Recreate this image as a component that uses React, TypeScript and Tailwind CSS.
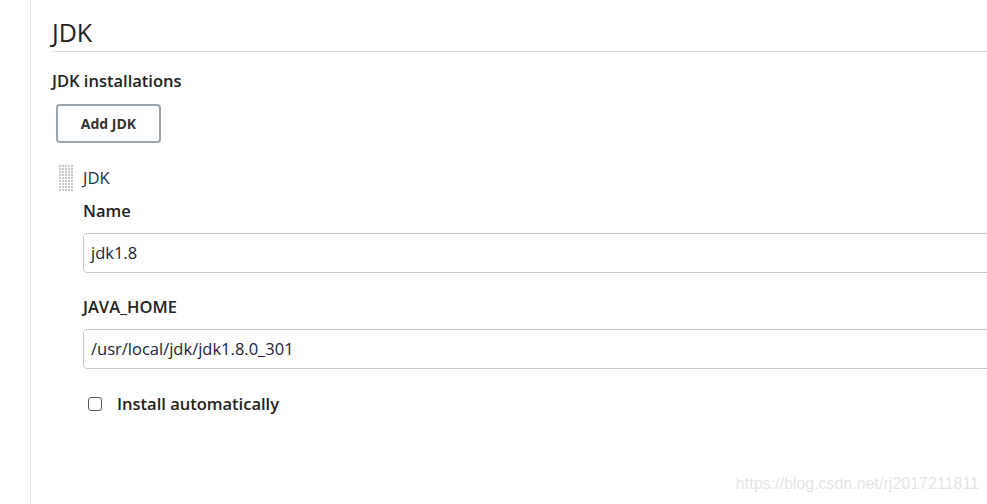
import React from "react";

function Grip() {
  const dots: JSX.Element[] = [];
  for (let r = 0; r < 9; r++) {
    for (let c = 0; c < 5; c++) {
      dots.push(<rect key={`${r}-${c}`} x={c * 3} y={r * 3} width={2} height={2} fill="#c8c8c8" />);
    }
  }
  return (
    <svg width="14" height="26" viewBox="0 0 14 26" aria-hidden>
      {dots}
    </svg>
  );
}

function TextField({ value }: { value: string }) {
  return (
    <div className="mr-[-20px] flex h-[40px] items-center rounded-[4px] border border-[#c8c8c8] px-[7px] text-[16.5px] text-[#222238]">
      {value}
    </div>
  );
}

export default function App() {
  return (
    <div
      className="relative h-[504px] w-[987px] overflow-hidden bg-white text-[#333]"
      style={{ fontFamily: '"Open Sans", "Noto Sans", sans-serif' }}
    >
      <div className="flex h-full">
        <div className="w-[31px] shrink-0 border-r border-[#e6e6e6]" />
        <div className="flex-1 pl-[21px] pt-[16px]">
          <h1 className="border-b border-[#dcdcdc] pb-[3px] text-[25px] leading-[32px] text-[#222]">JDK</h1>
          <div className="mt-[17px] text-[16.5px] font-semibold leading-[24px] text-[#222]">JDK installations</div>
          <button className="ml-[4px] mt-[11px] h-[39px] w-[105px] rounded-[4px] border-2 border-[#9ba4ad] text-[14px] font-bold text-[#333]">
            Add JDK
          </button>
          <div className="mt-[22px] flex items-center">
            <div className="ml-[7px] w-[24px]">
              <Grip />
            </div>
            <span className="text-[16.5px] text-[#23304a]">JDK</span>
          </div>
          <div className="ml-[31px]">
            <div className="mt-[8px] text-[16.5px] font-semibold leading-[24px] text-[#222]">Name</div>
            <div className="mt-[10px]">
              <TextField value="jdk1.8" />
            </div>
            <div className="mt-[22px] text-[16.5px] font-semibold leading-[24px] text-[#222]">JAVA_HOME</div>
            <div className="mt-[10px]">
              <TextField value="/usr/local/jdk/jdk1.8.0_301" />
            </div>
            <label className="mt-[23px] flex items-center">
              <span className="ml-[5px] h-[14px] w-[14px] rounded-[3px] border border-[#555]" />
              <span className="ml-[15px] text-[16.5px] font-semibold text-[#222]">Install automatically</span>
            </label>
          </div>
        </div>
      </div>
      <div
        className="absolute bottom-[8px] right-[8px] text-[16px] text-[#e4e4e4]"
        style={{ fontFamily: '"Liberation Sans", Arial, sans-serif' }}
      >
        https://blog.csdn.net/rj2017211811
      </div>
    </div>
  );
}
